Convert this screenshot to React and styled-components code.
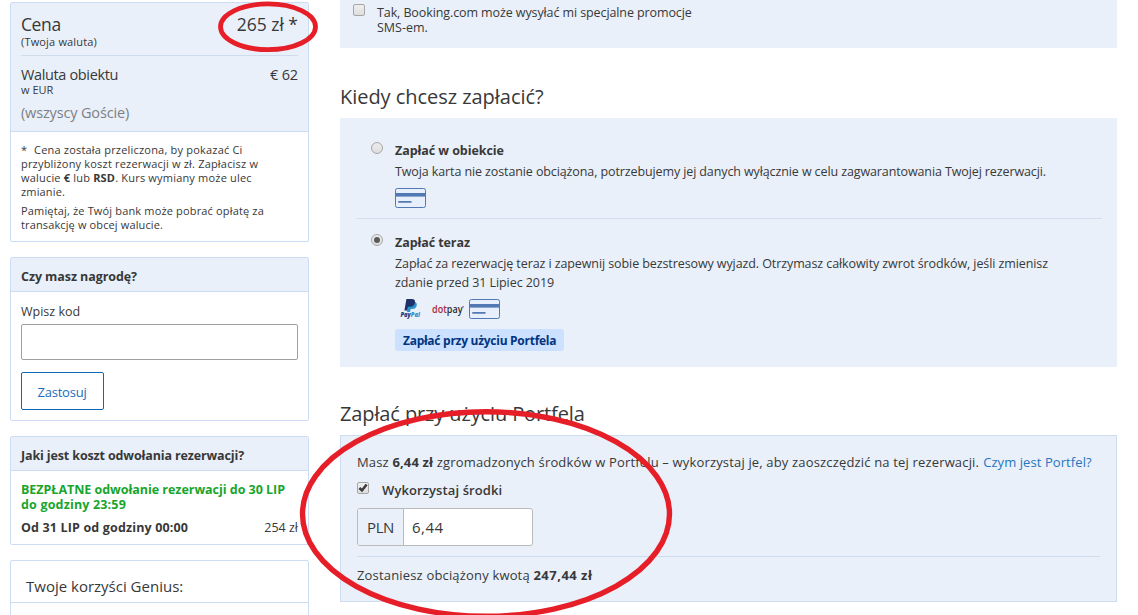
import React, { useState } from 'react'
import styled, { createGlobalStyle } from 'styled-components'

const GlobalStyle = createGlobalStyle`
  body {
    margin: 0;
    background: #fff;
    color: #383838;
    font-family: 'Open Sans', 'Noto Sans', sans-serif;
    overflow: hidden;
  }
  * {
    box-sizing: border-box;
  }
`

const Page = styled.div`
  position: relative;
  display: flex;
  gap: 31px;
  width: 1138px;
  height: 615px;
  padding-left: 10px;
  overflow: hidden;
`

const Sidebar = styled.aside`
  display: flex;
  flex-direction: column;
  gap: 15px;
  width: 299px;
  padding-top: 2px;
  flex-shrink: 0;
`

const Main = styled.main`
  width: 777px;
  flex-shrink: 0;
`

const Text = styled.div`
  font-size: ${(p) => p.$size || 12.5}px;
  line-height: ${(p) => p.$line || 15}px;
  font-weight: ${(p) => p.$weight || 400};
  letter-spacing: ${(p) => p.$spacing || 0}px;
  color: ${(p) => p.$color || 'inherit'};
  white-space: nowrap;
`

const Spaced = styled.b`
  letter-spacing: ${(p) => p.$spacing}px;
`

const Card = styled.section`
  border: 1px solid #cddcf5;
  border-radius: 2px;
  background: #fff;
  flex-shrink: 0;
`

const CardHead = styled.div`
  height: 34px;
  padding: 11px 10px 0;
  background: #e9f0fa;
  border-bottom: 1px solid #cddcf5;
`

const CardBody = styled.div`
  padding: ${(p) => p.$pad};
`

const PriceBox = styled.div`
  padding: 11px 10px 9px;
  background: #e9f0fa;
  border-bottom: 1px solid #cddcf5;
`

const Row = styled.div`
  display: flex;
  justify-content: space-between;
`

const PriceTotal = styled.div`
  padding-bottom: 6px;
  margin-bottom: 10px;
  border-bottom: 1px solid #cfdcee;
`

const ObjectCurrency = styled.div`
  margin-top: -1px;
`

const Guests = styled.div`
  margin-top: 7px;
`

const Paragraph = styled.div`
  & + & {
    margin-top: 5px;
  }
`

const Star = styled.span`
  display: inline-block;
  width: 13px;
`

const CodeInput = styled.input`
  display: block;
  width: 277px;
  height: 36px;
  margin: 5px 0 12px;
  border: 1px solid #a0a0a0;
  border-radius: 2px;
  background: #fff;
  outline: none;
`

const ApplyButton = styled.button`
  display: block;
  width: 83px;
  height: 38px;
  padding: 1px 1px 0 0;
  border: 1px solid #0f67b1;
  border-radius: 2px;
  background: #fff;
  color: #1a6dba;
  font: 500 13px/18px 'Open Sans', sans-serif;
  letter-spacing: -0.22px;
`

const CancelFee = styled(Row)`
  margin-top: 8px;
`

const GeniusHead = styled.div`
  height: 42px;
  padding: 16px 15px 0;
  border-bottom: 1px solid #cddcf5;
`

const GeniusBody = styled.div`
  height: 40px;
`

const PromoPanel = styled.div`
  display: flex;
  gap: 12px;
  height: 48px;
  padding: 4px 13px 0;
  background: #e9f0fa;
`

const PromoText = styled.div`
  padding-top: 1px;
`

const Heading = styled.h2`
  height: 24px;
  margin: ${(p) => p.$top}px 0 9px;
  font-size: 20px;
  line-height: 24px;
  font-weight: 400;
  letter-spacing: ${(p) => p.$spacing}px;
  white-space: nowrap;
`

const PayPanel = styled.div`
  height: 249px;
  padding: 24px 15px 0 16px;
  background: #e9f0fa;
`

const Option = styled.label`
  display: flex;
  gap: 12px;
  padding-left: 15px;
  & + & {
    margin-top: 9px;
    padding-top: 15px;
    border-top: 1px solid #d2dff0;
  }
`

const OptionText = styled.div`
  display: flex;
  flex-direction: column;
`

const Description = styled.div`
  margin-top: 2px;
`

const Methods = styled.div`
  display: flex;
  height: 21px;
  margin-top: 7px;
`

const PaypalWrap = styled.div`
  width: 37px;
  padding-left: 5px;
`

const DotpayWrap = styled.div`
  width: 37px;
  padding-top: 3px;
`

const WalletBadge = styled.div`
  width: 169px;
  height: 22px;
  margin-top: 9px;
  padding: 4px 0 0 8px;
  border-radius: 3px;
  background: #cce1ff;
`

const Radio = styled.span`
  display: flex;
  align-items: center;
  justify-content: center;
  width: 12px;
  height: 12px;
  flex-shrink: 0;
  border: 1px solid #a6a6a6;
  border-radius: 50%;
  background: linear-gradient(#ececec, #dedede);
  &::after {
    content: '';
    width: 6px;
    height: 6px;
    border-radius: 50%;
    background: ${(p) => (p.$checked ? '#5a5a5a' : 'transparent')};
  }
`

const Check = styled.span`
  display: flex;
  align-items: center;
  justify-content: center;
  width: 12px;
  height: 12px;
  flex-shrink: 0;
  border: 1px solid #a6a6a6;
  border-radius: 2px;
  background: linear-gradient(#efefef, #dedede);
`

const WalletPanel = styled.div`
  height: 167px;
  padding: 17px 16px 0;
  border: 1px solid #cddcf0;
  background: #e9f0fa;
`

const Link = styled.a`
  margin-left: 4px;
  color: #2676bd;
  letter-spacing: 0.08px;
`

const UseFunds = styled.label`
  display: flex;
  gap: 13px;
  height: 18px;
  margin-top: 11px;
`

const Amount = styled.div`
  display: flex;
  width: 176px;
  height: 38px;
  margin: 8px 0 10px;
  border: 1px solid #bababa;
  border-radius: 3px;
  background: #fff;
  overflow: hidden;
`

const Currency = styled.div`
  width: 46px;
  padding: 9px 0 0 9px;
  border-right: 1px solid #bababa;
  background: #e9f0fa;
`

const AmountValue = styled.div`
  padding: 9px 0 0 8px;
`

const Charge = styled.div`
  padding-top: 9px;
  border-top: 1px solid #cfdcee;
`

const Marks = styled.svg`
  position: absolute;
  top: 0;
  left: 0;
  pointer-events: none;
`

const CardIcon = () => (
  <svg width="31" height="20" viewBox="0 0 31 20">
    <rect x="0.5" y="0.5" width="30" height="19" rx="1.8" fill="#e6effb" stroke="#5279b3" />
    <rect x="1" y="5" width="29" height="3.6" fill="#5279b3" />
    <rect x="3.2" y="13" width="13.4" height="1.8" rx="0.6" fill="#5279b3" />
  </svg>
)

const PaypalIcon = () => (
  <svg width="22" height="20" viewBox="0 0 22 20">
    <path d="M8 3h6.2c2.4 0 3 1.900 2.400 3.900-.6 2-2 3-4.300 3h-1.600L10 13H7z" fill="#2a92cf" />
    <path d="M6.400 0h5.400c2.600 0 3.700 1.600 3.100 4-.6 2.600-2.300 3.800-5 3.800H8L7.200 11.600H4.400z" fill="#1f3168" />
    <text x="0.400" y="18" fontFamily="Open Sans" fontSize="6.200" fontWeight="800" fontStyle="italic" textLength="19.500" lengthAdjust="spacingAndGlyphs">
      <tspan fill="#1f3a7a">Pay</tspan>
      <tspan fill="#2a92cf">Pal</tspan>
    </text>
  </svg>
)

const DotpayIcon = () => (
  <svg width="33" height="18" viewBox="0 0 33 18">
    <text x="0" y="11" fontFamily="Open Sans" fontSize="10" fontWeight="600" textLength="30.500" lengthAdjust="spacingAndGlyphs">
      <tspan fill="#a62a3a">dot</tspan>
      <tspan fill="#2e2e30">pay</tspan>
    </text>
    <rect x="30.600" y="4" width="1" height="1.500" fill="#a62a3a" />
  </svg>
)

const CheckMark = () => (
  <svg width="10" height="10" viewBox="0 0 10 10">
    <path d="M1.400 5 4 7.500 8.600 1.500" fill="none" stroke="#3c3c3c" strokeWidth="2.500" />
  </svg>
)

const PriceCard = () => (
  <Card>
    <PriceBox>
      <PriceTotal>
        <Row>
          <Text $size={17.5} $line={20} $spacing={-0.4}>Cena</Text>
          <Text $size={17.5} $line={20}>265 zł *</Text>
        </Row>
        <Text $size={11} $line={15} $spacing={0.17}>(Twoja waluta)</Text>
      </PriceTotal>
      <Row>
        <Text $size={14.5} $line={18} $spacing={-0.36}>Waluta obiektu</Text>
        <Text $size={14.5} $line={18} $spacing={-0.16}>€ 62</Text>
      </Row>
      <ObjectCurrency>
        <Text $size={11} $line={14}>w EUR</Text>
      </ObjectCurrency>
      <Guests>
        <Text $size={14.5} $line={18} $spacing={-0.16} $color="#7c7f84">(wszyscy Goście)</Text>
      </Guests>
    </PriceBox>
    <CardBody $pad="11px 10px 9px">
      <Paragraph>
        <Text $size={11} $line={14} $spacing={0.2}><Star>*</Star>Cena została przeliczona, by pokazać Ci</Text>
        <Text $size={11} $line={14} $spacing={0.19}>przybliżony koszt rezerwacji w zł. Zapłacisz w</Text>
        <Text $size={11} $line={14} $spacing={0.19}>walucie <b>€</b> lub <b>RSD</b>. Kurs wymiany może ulec</Text>
        <Text $size={11} $line={14} $spacing={0.15}>zmianie.</Text>
      </Paragraph>
      <Paragraph>
        <Text $size={11} $line={14} $spacing={0.16}>Pamiętaj, że Twój bank może pobrać opłatę za</Text>
        <Text $size={11} $line={14} $spacing={0.13}>transakcję w obcej walucie.</Text>
      </Paragraph>
    </CardBody>
  </Card>
)

const RewardCard = () => {
  const [code, setCode] = useState('')
  return (
    <Card>
      <CardHead>
        <Text $weight={700} $spacing={-0.08}>Czy masz nagrodę?</Text>
      </CardHead>
      <CardBody $pad="12px 10px 10px">
        <Text>Wpisz kod</Text>
        <CodeInput value={code} onChange={(e) => setCode(e.target.value)} />
        <ApplyButton>Zastosuj</ApplyButton>
      </CardBody>
    </Card>
  )
}

const CancelCard = () => (
  <Card>
    <CardHead>
      <Text $weight={700} $spacing={-0.13}>Jaki jest koszt odwołania rezerwacji?</Text>
    </CardHead>
    <CardBody $pad="11px 10px 9px">
      <Text $weight={700} $spacing={-0.03} $color="#18a52c">BEZPŁATNE odwołanie rezerwacji do 30 LIP</Text>
      <Text $weight={700} $spacing={0.17} $color="#18a52c">do godziny 23:59</Text>
      <CancelFee>
        <Text $weight={700} $spacing={0.15}>Od 31 LIP od godziny 00:00</Text>
        <Text>254 zł</Text>
      </CancelFee>
    </CardBody>
  </Card>
)

const App = () => {
  const [payNow, setPayNow] = useState(true)
  const [useWallet, setUseWallet] = useState(true)

  return (
    <Page>
      <GlobalStyle />
      <Sidebar>
        <PriceCard />
        <RewardCard />
        <CancelCard />
        <Card>
          <GeniusHead>
            <Text $size={15} $line={18}>Twoje korzyści Genius:</Text>
          </GeniusHead>
          <GeniusBody />
        </Card>
      </Sidebar>
      <Main>
        <PromoPanel>
          <Check />
          <PromoText>
            <Text $spacing={-0.1}>Tak, Booking.com może wysyłać mi specjalne promocje</Text>
            <Text>SMS-em.</Text>
          </PromoText>
        </PromoPanel>

        <Heading $top={37} $spacing={-0.04}>Kiedy chcesz zapłacić?</Heading>
        <PayPanel>
          <Option onClick={() => setPayNow(false)}>
            <Radio $checked={!payNow} />
            <OptionText>
              <Text $line={18} $weight={700} $spacing={-0.06}>Zapłać w obiekcie</Text>
              <Description>
                <Text $line={19} $spacing={-0.109}>
                  Twoja karta nie zostanie obciążona, potrzebujemy jej danych wyłącznie w celu zagwarantowania Twojej rezerwacji.
                </Text>
              </Description>
              <Methods>
                <CardIcon />
              </Methods>
            </OptionText>
          </Option>
          <Option onClick={() => setPayNow(true)}>
            <Radio $checked={payNow} />
            <OptionText>
              <Text $line={18} $weight={700} $spacing={-0.08}>Zapłać teraz</Text>
              <Description>
                <Text $line={19} $spacing={-0.092}>
                  Zapłać za rezerwację teraz i zapewnij sobie bezstresowy wyjazd. Otrzymasz całkowity zwrot środków, jeśli zmienisz
                </Text>
                <Text $line={19} $spacing={-0.07}>zdanie przed 31 Lipiec 2019</Text>
              </Description>
              <Methods>
                <PaypalWrap>
                  <PaypalIcon />
                </PaypalWrap>
                <DotpayWrap>
                  <DotpayIcon />
                </DotpayWrap>
                <CardIcon />
              </Methods>
              <WalletBadge>
                <Text $size={12} $weight={700} $spacing={-0.27} $color="#003580">Zapłać przy użyciu Portfela</Text>
              </WalletBadge>
            </OptionText>
          </Option>
        </PayPanel>

        <Heading $top={35} $spacing={-0.12}>Zapłać przy użyciu Portfela</Heading>
        <WalletPanel>
          <Text $size={13} $line={18} $spacing={0.163}>
            Masz <b>6,44 zł</b> zgromadzonych środków w Portfelu – wykorzystaj je, aby zaoszczędzić na tej rezerwacji.
            <Link>Czym jest Portfel?</Link>
          </Text>
          <UseFunds onClick={() => setUseWallet(!useWallet)}>
            <Check>{useWallet && <CheckMark />}</Check>
            <Text $size={13} $line={16} $weight={600} $spacing={0.1}>Wykorzystaj środki</Text>
          </UseFunds>
          <Amount>
            <Currency>
              <Text $size={15} $line={18} $spacing={-0.38}>PLN</Text>
            </Currency>
            <AmountValue>
              <Text $size={15} $line={18} $weight={500} $spacing={0.5}>6,44</Text>
            </AmountValue>
          </Amount>
          <Charge>
            <Text $size={13} $line={18} $spacing={0.17}>
              Zostaniesz obciążony kwotą <Spaced $spacing={0.5}>247,44 zł</Spaced>
            </Text>
          </Charge>
        </WalletPanel>
      </Main>
      <Marks width="1138" height="615" viewBox="0 0 1138 615" fill="none" stroke="#e61e28">
        <ellipse cx="268" cy="26.800" rx="47.500" ry="22.900" strokeWidth="4.800" />
        <ellipse cx="486" cy="514" rx="183.500" ry="102.200" strokeWidth="5.400" />
      </Marks>
    </Page>
  )
}
export default App
